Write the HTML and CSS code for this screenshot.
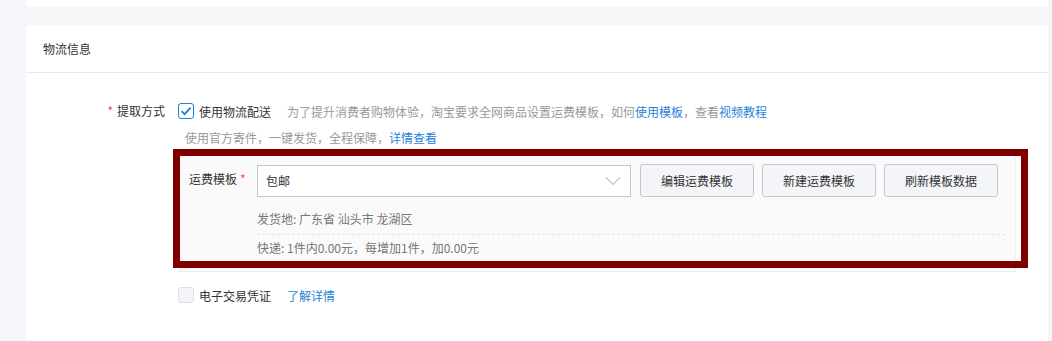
FILE: index.html
```html
<!DOCTYPE html>
<html lang="zh-CN">
<head>
    <meta charset="UTF-8">
    <title>物流信息</title>
    <link rel="stylesheet" href="styles.css">
</head>
<body>

<div class="page">
    <div class="top-card"></div>

    <!-- 物流信息 -->
    <section class="card">
        <div class="card-title">物流信息</div>
        <div class="card-body">

            <div class="form-item">
                <div class="form-label"><span class="required">*</span>提取方式</div>
                <div class="form-control">
                    <div class="line">
                        <span class="checkbox checked">
                            <svg width="12" height="10" viewBox="0 0 12 10"><path d="M1.5 5.2 L4.6 8.2 L10.6 1.6" fill="none" stroke="#1f7fd6" stroke-width="1.8"/></svg>
                        </span>
                        <span class="check-text">使用物流配送</span>
                        <span class="tip">为了提升消费者购物体验，淘宝要求全网商品设置运费模板，如何<a href="#">使用模板</a>，查看<a href="#">视频教程</a></span>
                    </div>
                    <div class="sub-tip">使用官方寄件，一键发货，全程保障，<a href="#">详情查看</a></div>

                    <div class="panel">
                        <div class="panel-row">
                            <div class="panel-label">运费模板<span class="required after">*</span></div>
                            <div class="select">
                                <span>包邮</span>
                                <svg width="16" height="10" viewBox="0 0 16 10"><path d="M1 1.5 L8 8.5 L15 1.5" fill="none" stroke="#9a9ca3" stroke-width="1"/></svg>
                            </div>
                            <button type="button" class="btn">编辑运费模板</button>
                            <button type="button" class="btn">新建运费模板</button>
                            <button type="button" class="btn">刷新模板数据</button>
                        </div>
                        <div class="panel-info">发货地: 广东省 汕头市 龙湖区</div>
                        <div class="panel-info dashed">快递: 1件内0.00元，每增加1件，加0.00元</div>
                    </div>
                    <div class="highlight"></div>

                    <div class="line extra">
                        <span class="checkbox"></span>
                        <span class="check-text">电子交易凭证</span>
                        <a href="#" class="more">了解详情</a>
                    </div>
                </div>
            </div>

        </div>
    </section>
</div>

</body>
</html>
```

FILE: styles.css
```css
body {
    margin: 0;
    padding: 0;
    background-color: #f5f6fa;
    color: #333;
    font-family: "Noto Sans CJK SC", "Noto Sans", sans-serif;
    font-size: 12px;
}

a {
    color: #1f82d8;
    text-decoration: none;
}

.page {
    padding: 0 4px 0 26px;
    height: 341px;
    overflow: hidden;
}

.top-card {
    height: 7px;
    background-color: white;
}

.card {
    margin-top: 18px;
    background-color: white;
    height: 320px;
}

.card-title {
    height: 47px;
    line-height: 47px;
    padding-left: 17px;
    border-bottom: 1px solid #e8e9ed;
}

.card-body {
    padding-top: 28px;
}

.form-item {
    display: flex;
}

.form-label {
    width: 139px;
    text-align: right;
    line-height: 20px;
    flex-shrink: 0;
}

.required {
    color: #f0504a;
    margin-right: 4px;
    font-size: 12px;
}

.required.after {
    margin: 0 0 0 3px;
}

.form-control {
    margin-left: 13px;
    position: relative;
    flex: 1;
}

.line {
    display: flex;
    align-items: center;
    height: 20px;
}

.checkbox {
    width: 14px;
    height: 14px;
    border: 1px solid #dcdee3;
    border-radius: 3px;
    background-color: #f4f5f9;
    display: flex;
    align-items: center;
    justify-content: center;
    flex-shrink: 0;
}

.checkbox.checked {
    border-color: #1f7fd6;
    background-color: white;
}

.check-text {
    margin-left: 5px;
}

.tip {
    margin-left: 16px;
    color: #999;
}

.sub-tip {
    margin-top: 7px;
    padding-left: 7px;
    line-height: 20px;
    color: #999;
}

.panel {
    margin-top: 7px;
    width: 838px;
    background-color: #fafafa;
    border-right: 1px solid #eceef1;
    border-bottom: 1px solid #eceef1;
    padding: 9px 0 0 11px;
    box-sizing: border-box;
    height: 117px;
}

.panel-row {
    display: flex;
    align-items: center;
}

.panel-label {
    width: 68px;
    flex-shrink: 0;
    margin-top: -4px;
}

.select {
    width: 374px;
    height: 32px;
    box-sizing: border-box;
    border: 1px solid #c4c6cf;
    background-color: white;
    display: flex;
    align-items: center;
    justify-content: space-between;
    padding: 0 9px 0 8px;
}

.btn {
    margin-left: 8px;
    width: 114px;
    height: 33px;
    border: 1px solid #c4c6cf;
    border-radius: 3px;
    background-color: #f4f5f8;
    color: #333;
    font-family: inherit;
    font-size: 12px;
    padding: 0;
}

.select + .btn {
    margin-left: 9px;
}

.panel-info {
    margin-left: 68px;
    margin-right: 10px;
    color: #777;
    line-height: 20px;
    margin-top: 12px;
}

.panel-info.dashed {
    margin-top: 5px;
    padding-top: 3px;
    border-top: 1px dashed #e2e3e7;
}

.highlight {
    position: absolute;
    left: -5px;
    top: 48px;
    width: 841px;
    height: 105px;
    border: 7px solid #800000;
}

.extra {
    margin-top: 13px;
}

.more {
    margin-left: 16px;
}
```
